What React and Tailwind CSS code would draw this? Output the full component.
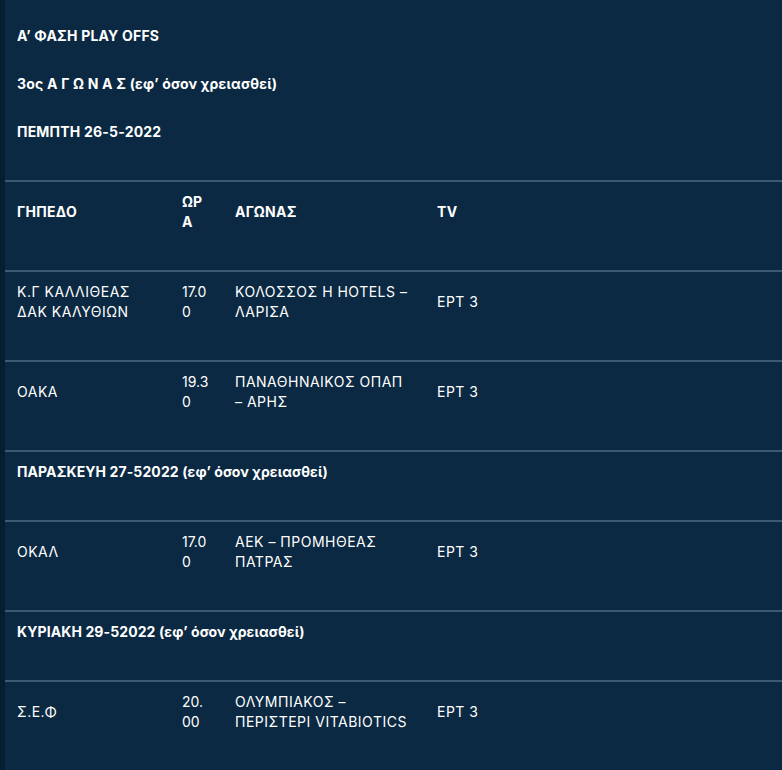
const rows = [
  { type: 'head', cells: ['ΓΗΠΕΔΟ', 'ΩΡΑ', 'ΑΓΩΝΑΣ', 'TV'] },
  { type: 'game', cells: [['Κ.Γ ΚΑΛΛΙΘΕΑΣ', 'ΔΑΚ ΚΑΛΥΘΙΩΝ'], '17.00', 'ΚΟΛΟΣΣΟΣ Η HOTELS – ΛΑΡΙΣΑ', 'ΕΡΤ 3'] },
  { type: 'game', cells: ['ΟΑΚΑ', '19.30', 'ΠΑΝΑΘΗΝΑΙΚΟΣ ΟΠΑΠ – ΑΡΗΣ', 'ΕΡΤ 3'] },
  { type: 'day', text: 'ΠΑΡΑΣΚΕΥΗ 27-52022 (εφ’ όσον χρειασθεί)' },
  { type: 'game', cells: ['ΟΚΑΛ', '17.00', 'ΑΕΚ – ΠΡΟΜΗΘΕΑΣ ΠΑΤΡΑΣ', 'ΕΡΤ 3'] },
  { type: 'day', text: 'ΚΥΡΙΑΚΗ 29-52022 (εφ’ όσον χρειασθεί)' },
  { type: 'game', cells: ['Σ.Ε.Φ', '20.00', 'ΟΛΥΜΠΙΑΚΟΣ – ΠΕΡΙΣΤΕΡΙ VITABIOTICS', 'ΕΡΤ 3'] },
];

function Cell({ children, bold, narrow }) {
  return (
    <div className={`flex items-center px-3 pt-[10px] pb-[38px] ${bold ? 'font-bold tracking-[0.3px]' : ''}`}>
      <div className={narrow ? 'break-all tracking-normal' : ''}>{children}</div>
    </div>
  );
}

export default function App() {
  return (
    <div
      className="flex min-h-[770px] bg-[#0b2942] text-white text-[14px] leading-5 tracking-[0.5px]"
      style={{ fontFamily: 'Inter, "Noto Sans", sans-serif' }}
    >
      <div className="w-[5px] shrink-0 bg-[#071e31]" />
      <div className="flex-1">
        <div className="px-3 pt-[26px] pb-[38px] font-bold tracking-[0.2px] flex flex-col gap-[28px]">
          <p>Α’ ΦΑΣΗ PLAY OFFS</p>
          <p>3ος Α Γ Ω Ν Α Σ (εφ’ όσον χρειασθεί)</p>
          <p>ΠΕΜΠΤΗ 26-5-2022</p>
        </div>
        {rows.map((row, i) =>
          row.type === 'day' ? (
            <div key={i} className="border-t-2 border-[#3d5a74] px-3 pt-[10px] pb-[38px] font-bold tracking-[0.1px]">
              {row.text}
            </div>
          ) : (
            <div key={i} className="grid grid-cols-[165px_53px_202px_1fr] border-t-2 border-[#3d5a74]">
              {row.cells.map((c, j) => (
                <Cell key={j} bold={row.type === 'head'} narrow={j === 1}>
                  {Array.isArray(c) ? c.map((l, k) => <div key={k}>{l}</div>) : c}
                </Cell>
              ))}
            </div>
          )
        )}
      </div>
    </div>
  );
}
